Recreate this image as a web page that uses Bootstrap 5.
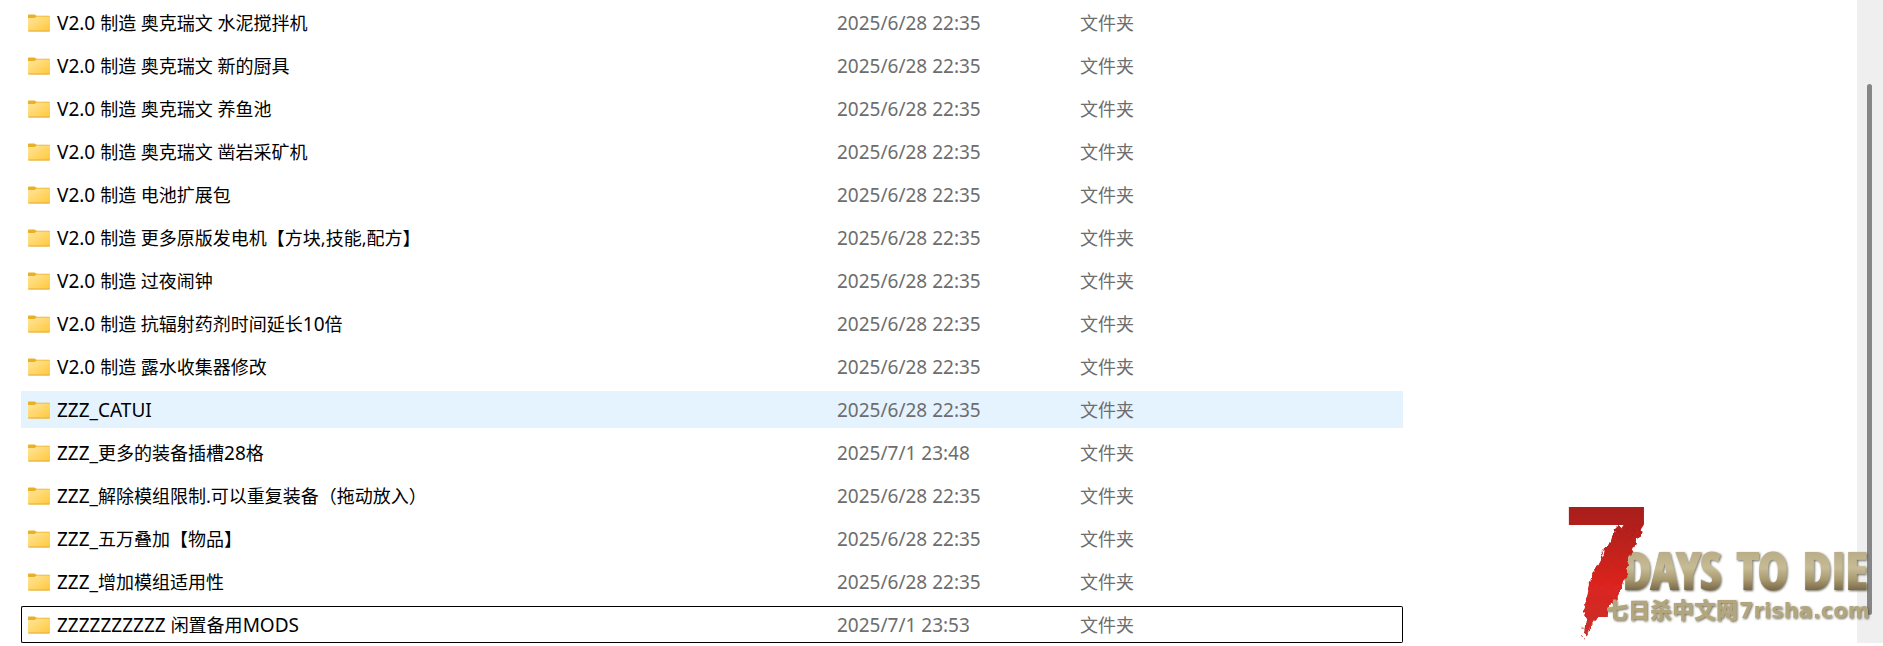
<!DOCTYPE html>
<html lang="zh-CN">
<head>
<meta charset="utf-8">
<meta name="viewport" content="width=device-width, initial-scale=1">
<title>Mods</title>
<link rel="stylesheet" href="https://cdn.jsdelivr.net/npm/bootstrap@5.3.0/dist/css/bootstrap.min.css">
<style>
body{font-family:"Noto Sans","Noto Sans CJK SC",sans-serif;font-size:18px;line-height:24px;color:#000;background:#fff}
.explorer{overflow:hidden}
.files{width:1382px;table-layout:fixed;border-collapse:separate;border-spacing:0 6px;margin:-2px 0 -6px 21px}
.files td{height:37px;padding:0 7px 0 6px;border:0 solid transparent;border-width:1px 0;white-space:nowrap;color:#6d6d6d;vertical-align:middle}
.files td:first-child{border-left-width:1px;color:#000}
.files td:last-child{border-right-width:1px}
.files .hovered td{background:#e5f3ff}
.files .focused td{border-color:#000}
.files .focused td:first-child{border-radius:2px 0 0 2px}
.files .focused td:last-child{border-radius:0 2px 2px 0}
.col-name{width:810px}.col-date{width:243px}
.lat{font-size:19px}
.entry{gap:7px}
.folder{width:22px;height:18px;flex:none}
.rail{width:26px;padding:84px 11px 28px 10px;background:#efefef}
.thumb{width:5px;border-radius:3px;background:#868686}
.watermark{right:0;bottom:0;width:330px;height:146px;pointer-events:none}
.seven{font:bold 160px "Liberation Sans",sans-serif}
.title-word{font:bold 50px "Noto Sans ExtraCondensed","Open Sans Condensed","Roboto Condensed","Liberation Sans Narrow",sans-serif;stroke:url(#stone);stroke-width:2px}
.site-cn{font:900 22px "Noto Sans CJK SC",sans-serif}
.site-lat{font:bold 21px "DejaVu Sans",sans-serif}
</style>
<script src="https://cdn.jsdelivr.net/npm/bootstrap@5.3.0/dist/js/bootstrap.bundle.min.js"></script>
</head>
<body>
<svg width="0" height="0" class="position-absolute" aria-hidden="true">
  <defs>
    <linearGradient id="folderFace" x1="0" y1="0" x2="1" y2="1"><stop offset="0" stop-color="#ffe69c"/><stop offset="1" stop-color="#ffc83a"/></linearGradient>
    <symbol id="folder" viewBox="0 0 22 18">
      <path d="M0 1.2Q0 .5.8.5H6.6L8.6 1.8H21Q22 1.8 22 2.8V8H0Z" fill="#eab126"/>
      <path d="M0 4H6.6L8.6 2.6H22V16.6Q22 17.4 21 17.4H1Q0 17.4 0 16.6Z" fill="url(#folderFace)"/>
      <path d="M.3 17H21.7" stroke="#e2ac3e"/>
    </symbol>
  </defs>
</svg>
<div class="explorer d-flex position-relative">
  <main class="flex-grow-1">
    <table class="files">
      <colgroup><col class="col-name"><col class="col-date"><col></colgroup>
      <tbody>
        <tr><td><div class="entry d-flex align-items-center"><svg class="folder"><use href="#folder"/></svg><span><span class="lat">V2.0 </span>制造 奥克瑞文 水泥搅拌机</span></div></td><td class="lat">2025/6/28 22:35</td><td>文件夹</td></tr>
        <tr><td><div class="entry d-flex align-items-center"><svg class="folder"><use href="#folder"/></svg><span><span class="lat">V2.0 </span>制造 奥克瑞文 新的厨具</span></div></td><td class="lat">2025/6/28 22:35</td><td>文件夹</td></tr>
        <tr><td><div class="entry d-flex align-items-center"><svg class="folder"><use href="#folder"/></svg><span><span class="lat">V2.0 </span>制造 奥克瑞文 养鱼池</span></div></td><td class="lat">2025/6/28 22:35</td><td>文件夹</td></tr>
        <tr><td><div class="entry d-flex align-items-center"><svg class="folder"><use href="#folder"/></svg><span><span class="lat">V2.0 </span>制造 奥克瑞文 凿岩采矿机</span></div></td><td class="lat">2025/6/28 22:35</td><td>文件夹</td></tr>
        <tr><td><div class="entry d-flex align-items-center"><svg class="folder"><use href="#folder"/></svg><span><span class="lat">V2.0 </span>制造 电池扩展包</span></div></td><td class="lat">2025/6/28 22:35</td><td>文件夹</td></tr>
        <tr><td><div class="entry d-flex align-items-center"><svg class="folder"><use href="#folder"/></svg><span><span class="lat">V2.0 </span>制造 更多原版发电机【方块,技能,配方】</span></div></td><td class="lat">2025/6/28 22:35</td><td>文件夹</td></tr>
        <tr><td><div class="entry d-flex align-items-center"><svg class="folder"><use href="#folder"/></svg><span><span class="lat">V2.0 </span>制造 过夜闹钟</span></div></td><td class="lat">2025/6/28 22:35</td><td>文件夹</td></tr>
        <tr><td><div class="entry d-flex align-items-center"><svg class="folder"><use href="#folder"/></svg><span><span class="lat">V2.0 </span>制造 抗辐射药剂时间延长<span class="lat">10</span>倍</span></div></td><td class="lat">2025/6/28 22:35</td><td>文件夹</td></tr>
        <tr><td><div class="entry d-flex align-items-center"><svg class="folder"><use href="#folder"/></svg><span><span class="lat">V2.0 </span>制造 露水收集器修改</span></div></td><td class="lat">2025/6/28 22:35</td><td>文件夹</td></tr>
        <tr class="hovered"><td><div class="entry d-flex align-items-center"><svg class="folder"><use href="#folder"/></svg><span class="lat">ZZZ_CATUI</span></div></td><td class="lat">2025/6/28 22:35</td><td>文件夹</td></tr>
        <tr><td><div class="entry d-flex align-items-center"><svg class="folder"><use href="#folder"/></svg><span><span class="lat">ZZZ_</span>更多的装备插槽<span class="lat">28</span>格</span></div></td><td class="lat">2025/7/1 23:48</td><td>文件夹</td></tr>
        <tr><td><div class="entry d-flex align-items-center"><svg class="folder"><use href="#folder"/></svg><span><span class="lat">ZZZ_</span>解除模组限制.可以重复装备（拖动放入）</span></div></td><td class="lat">2025/6/28 22:35</td><td>文件夹</td></tr>
        <tr><td><div class="entry d-flex align-items-center"><svg class="folder"><use href="#folder"/></svg><span><span class="lat">ZZZ_</span>五万叠加【物品】</span></div></td><td class="lat">2025/6/28 22:35</td><td>文件夹</td></tr>
        <tr><td><div class="entry d-flex align-items-center"><svg class="folder"><use href="#folder"/></svg><span><span class="lat">ZZZ_</span>增加模组适用性</span></div></td><td class="lat">2025/6/28 22:35</td><td>文件夹</td></tr>
        <tr class="focused"><td><div class="entry d-flex align-items-center"><svg class="folder"><use href="#folder"/></svg><span><span class="lat">ZZZZZZZZZZ </span>闲置备用<span class="lat">MODS</span></span></div></td><td class="lat">2025/7/1 23:53</td><td>文件夹</td></tr>
      </tbody>
    </table>
  </main>
  <div class="rail d-flex"><div class="thumb"></div></div>
  <svg class="watermark position-absolute" viewBox="0 0 330 146" role="img" aria-label="7 Days to Die">
    <defs>
      <linearGradient id="blood" gradientUnits="userSpaceOnUse" x1="0" y1="10" x2="0" y2="138"><stop offset="0" stop-color="#a81e1b"/><stop offset=".25" stop-color="#b9201c"/><stop offset=".6" stop-color="#dc241f"/><stop offset="1" stop-color="#c9302a"/></linearGradient>
      <linearGradient id="stone" gradientUnits="userSpaceOnUse" x1="0" y1="48" x2="0" y2="94"><stop offset="0" stop-color="#b3a883"/><stop offset=".5" stop-color="#c6bb94"/><stop offset=".75" stop-color="#a99a70"/><stop offset="1" stop-color="#776546"/></linearGradient>
      <filter id="bevel" x="-5%" y="-10%" width="110%" height="130%"><feDropShadow dx="1" dy="1" stdDeviation="1" flood-color="#4c4635" flood-opacity=".8"/></filter>
      <filter id="rough" x="-20%" y="-5%" width="140%" height="110%"><feTurbulence type="fractalNoise" baseFrequency=".2 .12" numOctaves="3" seed="4" result="n"/><feDisplacementMap in="SourceGraphic" in2="n" scale="10" xChannelSelector="R" yChannelSelector="G"/></filter>
    </defs>
    <g filter="url(#bevel)" fill="url(#stone)">
      <text class="title-word" x="70" y="92">DAYS</text>
      <text class="title-word" x="184" y="92">TO</text>
      <text class="title-word" x="250" y="92">DIE</text>
    </g>
    <g fill="url(#blood)">
      <text class="seven" x="9" y="120">7</text>
      <path filter="url(#rough)" d="M61 32 57 46 51 52 47 68 38 80 34 102 30 116 34 115 30 142 42 122 48 119 66 98 72 80 76 62 91 26Z"/>
    </g>
    <g filter="url(#bevel)" fill="#b3a67d">
      <text class="site-cn" x="53" y="121">七日杀中文网</text>
      <text class="site-lat" x="186" y="121">7risha.com</text>
    </g>
  </svg>
</div>
</body>
</html>
